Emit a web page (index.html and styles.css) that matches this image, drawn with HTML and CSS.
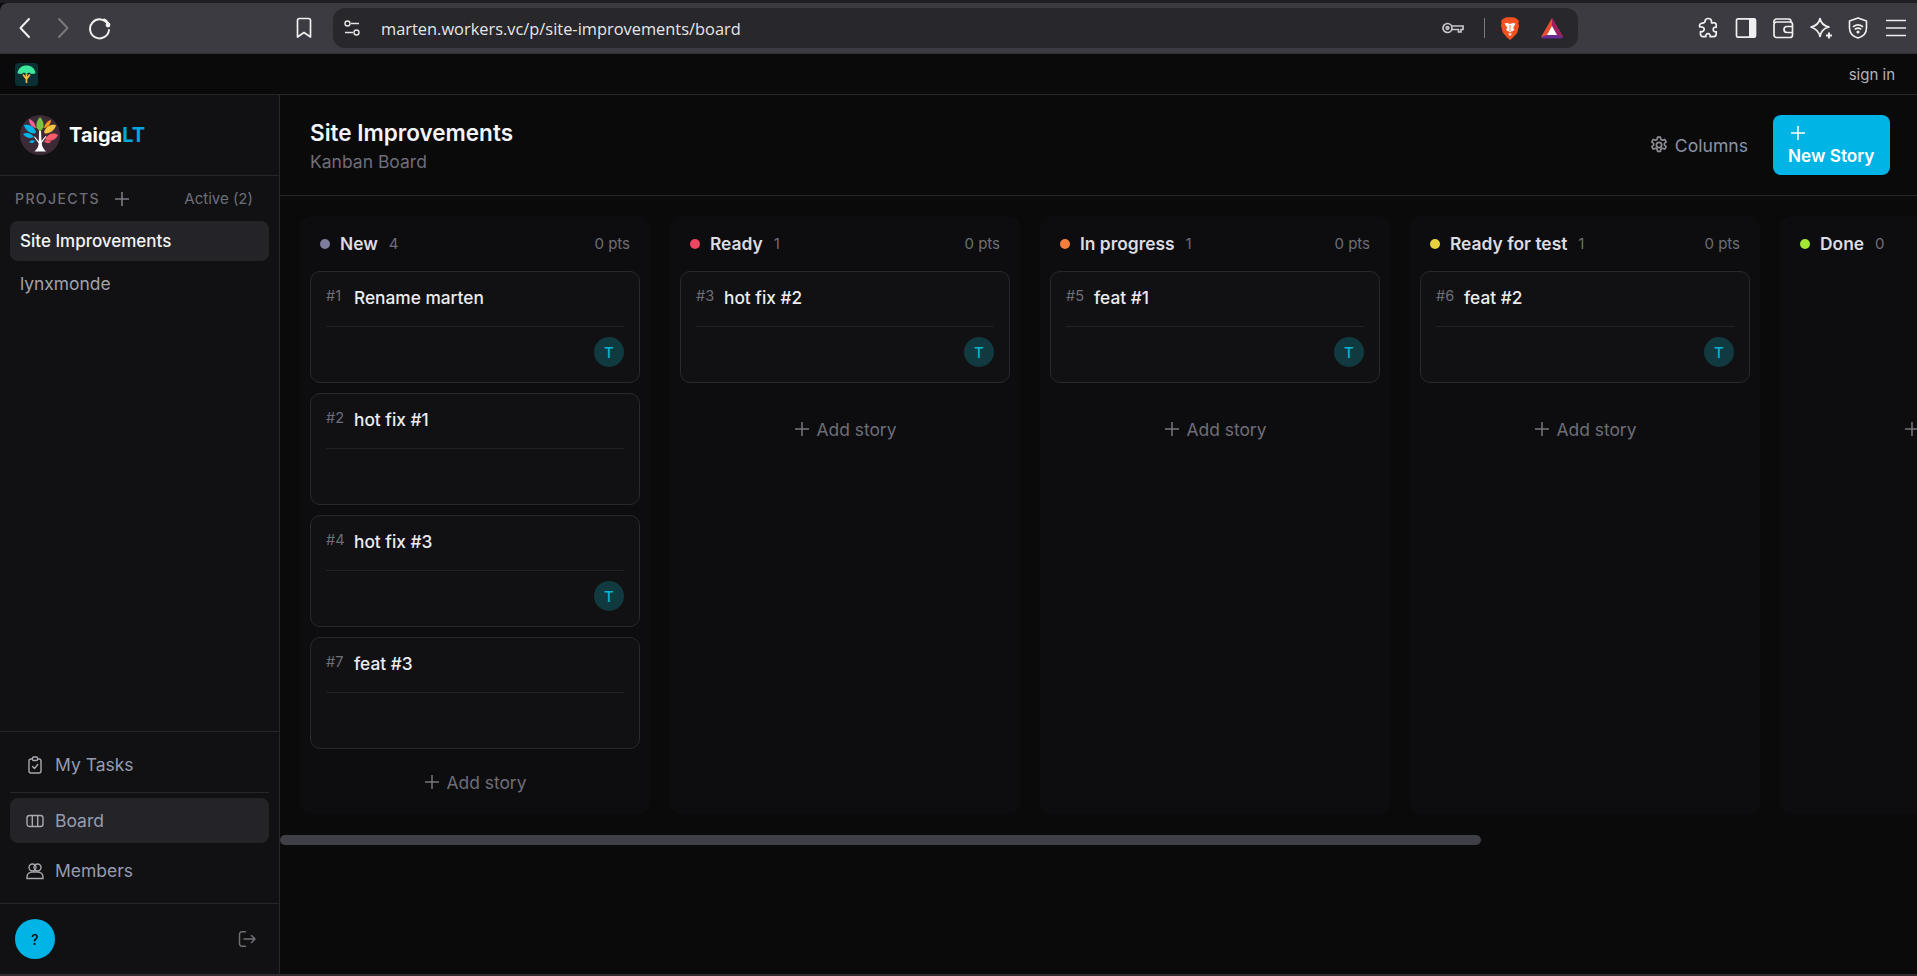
FILE: index.html
```html
<!DOCTYPE html>
<html lang="en">
<head>
<meta charset="utf-8">
<title>Site Improvements - Kanban Board</title>
<link rel="stylesheet" href="styles.css">
</head>
<body>
<div class="top-strip"></div>
<header class="browser-bar">
  <div class="nav-group">
    <span class="tb-icon"><svg width="24" height="24" viewBox="0 0 24 24" fill="none" stroke="#f0f0f0" stroke-width="2" stroke-linecap="round" stroke-linejoin="round"><path d="M16 3 7.500 12 16 21"/></svg></span>
    <span class="tb-icon"><svg width="24" height="24" viewBox="0 0 24 24" fill="none" stroke="#77777c" stroke-width="2" stroke-linecap="round" stroke-linejoin="round"><path d="M8 3l8.500 9L8 21"/></svg></span>
    <span class="tb-icon"><svg width="24" height="24" viewBox="0 0 24 24" fill="none" stroke="#f0f0f0" stroke-width="2" stroke-linecap="round"><path d="M20 8.500A9.500 9.500 0 1 0 21 14"/><path d="M16 3.500A9.500 9.500 0 0 1 20 7"/><circle cx="20" cy="9" r="2.400" fill="#f0f0f0" stroke="none"/></svg></span>
  </div>
  <span class="tb-icon bookmark"><svg width="24" height="24" viewBox="0 0 24 24" fill="none" stroke="#f0f0f0" stroke-width="1.700" stroke-linejoin="round"><path d="M5.500 4.500a2 2 0 0 1 2-2h9a2 2 0 0 1 2 2V21l-6.500-4.500L5.500 21z"/></svg></span>
  <div class="address">
    <svg class="site-settings" width="18" height="18" viewBox="0 0 18 18" fill="none" stroke="#e4e4e4" stroke-width="1.400"><circle cx="4.500" cy="4.500" r="2.500"/><path d="M8 4.500h8M2 13.500h8"/><circle cx="13.500" cy="13.500" r="2.500"/></svg>
    <span class="url">marten.workers.vc/p/site-improvements/board</span>
    <svg class="key" width="22" height="14" viewBox="0 0 22 14" fill="none" stroke="#c8c8cc" stroke-width="1.700"><circle cx="5.500" cy="7" r="4.500"/><circle cx="5.500" cy="7" r="1.300"/><path d="M10 5h11v3.500h-2V11h-2.500V8.500H10"/></svg>
    <span class="addr-sep"></span>
    <svg class="brave" width="20" height="23" viewBox="0 0 20 23"><path d="M3.500 1.500 6.500.2h7l3 1.300 2.500 2.500-.6 2.500.6 2.500-1.800 7L13 20.500 10 23l-3-2.500-4.200-5L1 8.500 1.600 6 1 4z" fill="#f4511e"/><path d="M4.500 6.500 7.500 6 10 7l2.500-1 3 .5-1.500 3-1 1.500 1.500 1.500-1.500 1.500-2 .5L10 16l-.5-1.500-2-.5L6 12.500 7.500 11l-1-1.500z" fill="#fff"/><path d="M8 16.500h4L10 19z" fill="#fff"/><path d="M10 8v6" stroke="#f4511e" stroke-width=".8"/></svg>
    <svg class="bat" width="24" height="22" viewBox="0 0 24 22"><path d="M12 1 1 20h22z" fill="#e94e2e"/><path d="M12 1 23 20h-6L12 11z" fill="#9e1f63"/><path d="M1 20h22l-1 1.500H2z" fill="#662d91"/><path d="M1 20 7 18h10l6 2z" fill="#662d91"/><path d="M12 9l5 9H7z" fill="#fff"/></svg>
  </div>
  <div class="ext-group">
    <span class="tb-icon"><svg width="24" height="24" viewBox="0 0 24 24" fill="none" stroke="#f0f0f0" stroke-width="1.700" stroke-linejoin="round"><path d="M9 5.500c0-4 6.500-4 6.500 0v1.300h2.700c1.200 0 2 .8 2 2v2.500c-1.300-.3-3 .2-3 2.200s1.900 2.700 3 2.200v2c0 1.800-1 3-2.800 3h-3.300c.5-1.500-.5-3-2.100-3s-2.800 1.500-2.100 3H7c-1.500 0-2.500-1-2.500-2.500v-2.700c2 .7 3.700-.5 3.700-2.300S6 10.500 3.800 11c-.9-1.500 0-3.200 1.700-3.700C7 7 9 7 9 5.500z"/></svg></span>
    <span class="tb-icon"><svg width="24" height="24" viewBox="0 0 24 24" fill="none"><rect x="2.500" y="2.800" width="19" height="18.400" rx="1.500" stroke="#f0f0f0" stroke-width="1.700"/><rect x="15" y="3" width="6.500" height="18" fill="#f0f0f0"/></svg></span>
    <span class="tb-icon"><svg width="24" height="24" viewBox="0 0 24 24" fill="none" stroke="#f0f0f0" stroke-width="1.700" stroke-linejoin="round"><path d="M3 7V5.500A2.500 2.500 0 0 1 5.500 3h12A2.500 2.500 0 0 1 20 5.500V7"/><rect x="3" y="6" width="18.500" height="15.500" rx="2.500"/><path d="M21.500 10.500H16a2.500 2.500 0 0 0 0 6h5.500"/></svg></span>
    <span class="tb-icon"><svg width="24" height="24" viewBox="0 0 24 24" fill="none" stroke="#f0f0f0" stroke-width="1.700" stroke-linejoin="round"><path d="M11 2.500c1 5 3.500 7.500 9 8.500-3 .7-5 1.800-6.500 3.800-1 1.300-1.800 3-2.500 5.700-1-5-3.500-7.500-9-9.500 5.500-1 8-3.500 9-8.500z"/><path d="M20 16.500v6M17 19.500h6" stroke-width="2"/></svg></span>
    <span class="tb-icon"><svg width="24" height="24" viewBox="0 0 24 24" fill="none" stroke="#f0f0f0" stroke-width="1.600" stroke-linecap="round" stroke-linejoin="round"><path d="M12 2 20.500 5v7c0 5-3.500 8.500-8.500 10-5-1.500-8.500-5-8.500-10V5z"/><path d="M7.500 10.500c2.700-2 6.300-2 9 0M9.300 13c1.600-1.100 3.800-1.100 5.400 0"/><circle cx="12" cy="16" r=".8" fill="#f0f0f0"/></svg></span>
    <span class="tb-icon"><svg width="24" height="24" viewBox="0 0 24 24" fill="none" stroke="#f0f0f0" stroke-width="1.700"><path d="M2 4.500h20M2 12h20M2 19.500h20"/></svg></span>
  </div>
</header>
<div class="app-bar">
  <svg class="app-mark" width="23" height="23" viewBox="0 0 23 23"><rect width="23" height="23" rx="3.500" fill="#0a3034"/><path d="M2.500 10.500C3 5 7 2.500 11.500 2.500S20 5 20.500 10.500l-4 .5-2.500-1.500-2.500 1.500-2.500-1.500L6.500 11z" fill="#3ee89a"/><path d="M11.500 11v9M8 11.500l3.500 4.500 3.500-4.500" stroke="#f5b642" stroke-width="1.700" fill="none"/></svg>
  <span class="sign-in">sign in</span>
</div>
<div class="app">
  <aside class="sidebar">
    <div class="brand">
      <svg width="40" height="40" viewBox="0 0 40 40"><circle cx="20" cy="20" r="20" fill="#3c2a36"/><path d="M20 2c3 3 4 7 3.500 10.500L20 17l-3.500-4.500C16 9 17 5 20 2z" fill="#7cc242"/><path d="M4 10c5-1 10 1 12 7l-1 1.500C10 19 5 15 4 10z" fill="#00b4e6"/><path d="M9 4c4 1 6 4 7 9-4-.5-7-4-7-9z" fill="#f06292"/><path d="M36 10c-5-1-10 1-12 7l1 1.500c5 .5 10-3.500 11-8.500z" fill="#f9c440"/><path d="M38 20c-5-3-10-1-13 4 5 3 10 2 13-4z" fill="#ff5b6b"/><path d="M31 5c-4 1-6 4-7 8 4-.5 7-4 7-8z" fill="#f7941e"/><path d="M3 19c4-2 8-1 11 3-4 2-8 1-11-3z" fill="#00b4e6"/><path d="M9 27c2-2 4-2 6-1-1 2-4 3-6 1z" fill="#00b4e6"/><path d="M31 27c-2-2-5-2-7-1 1 2 5 3 7 1z" fill="#ff5b6b"/><path d="M19 16h2l.5 10 4-5 .8.6-4.600 6.400c.3 4 2 6 4.300 8.500H14.500c2.300-2.500 4-4.500 4.200-8l-4.700-6.500.8-.6 4 5z" fill="#fff"/></svg>
      <span class="brand-name">Taiga<span class="brand-accent">LT</span></span>
    </div>
    <div class="projects-head">
      <span class="projects-label">PROJECTS</span>
      <svg width="16" height="16" viewBox="0 0 16 16" fill="none" stroke="#7a7a83" stroke-width="1.600"><path d="M8 1v14M1 8h14"/></svg>
      <span class="active-count">Active (2)</span>
    </div>
    <div class="project-list">
      <div class="project selected">Site Improvements</div>
      <div class="project">lynxmonde</div>
    </div>
    <nav class="side-nav">
      <div class="nav-item"><svg width="18" height="18" viewBox="0 0 18 18" fill="none" stroke="#a7a7ae" stroke-width="1.400" stroke-linecap="round" stroke-linejoin="round"><rect x="3" y="3" width="12" height="14" rx="2"/><rect x="6.500" y="1" width="5" height="3.500" rx="1" fill="#111113"/><path d="M6.500 10.500 8.500 12.500 11.800 8.500"/></svg><span>My Tasks</span></div>
      <div class="nav-rule"></div>
      <div class="nav-item selected"><svg width="18" height="18" viewBox="0 0 18 18" fill="none" stroke="#a7a7ae" stroke-width="1.400"><rect x="1" y="3.500" width="16" height="11" rx="2.500"/><path d="M6.300 3.500v11M11.700 3.500v11"/></svg><span>Board</span></div>
      <div class="nav-item"><svg width="18" height="18" viewBox="0 0 18 18" fill="none" stroke="#a7a7ae" stroke-width="1.400"><circle cx="6.500" cy="5.500" r="3.500"/><circle cx="11.500" cy="5.500" r="3.500"/><path d="M1 16.500v-1.500c0-3 2.500-5 5.500-5h5c3 0 5.500 2 5.500 5v1.500z"/></svg><span>Members</span></div>
    </nav>
    <div class="user-foot">
      <span class="user-badge">?</span>
      <svg width="18" height="18" viewBox="0 0 18 18" fill="none" stroke="#6f6f78" stroke-width="1.500" stroke-linecap="round" stroke-linejoin="round"><path d="M7.500 1.800H4a2.500 2.500 0 0 0-2.500 2.500v9.400A2.500 2.500 0 0 0 4 16.200h3.500"/><path d="M6 9h11M13.500 5.500 17 9l-3.500 3.500"/></svg>
    </div>
  </aside>
  <main class="main">
    <div class="page-head">
      <div class="page-title">
        <h1>Site Improvements</h1>
        <p>Kanban Board</p>
      </div>
      <button class="columns-btn"><svg width="20" height="20" viewBox="0 0 24 24" fill="none" stroke="#8d8d96" stroke-width="2"><path d="M10.300 2.500h3.400l.6 2.900 1.800.9 2.800-1 1.700 2.900-2.200 2c.1.700.1 1.100 0 1.800l2.200 2-1.700 2.900-2.800-1-1.800 1-.6 2.800h-3.400l-.6-2.800-1.800-1-2.800 1-1.700-2.900 2.200-2a5 5 0 0 1 0-1.800l-2.200-2 1.700-2.900 2.800 1 1.800-.9z" stroke-linejoin="round"/><circle cx="12" cy="12" r="3.200"/></svg><span>Columns</span></button>
      <button class="new-btn"><svg class="new-plus" width="16" height="16" viewBox="0 0 16 16" fill="none" stroke="#fff" stroke-width="1.500"><path d="M8 1v14M1 8h14"/></svg><span>New Story</span></button>
    </div>
    <div class="board">
      <section class="column">
        <div class="col-head"><i class="dot dot-new"></i><b>New</b><span class="count">4</span><span class="pts">0 pts</span></div>
        <div class="cards">
          <article class="card"><div class="card-top"><span class="card-id">#1</span><span class="card-title">Rename marten</span></div><div class="card-foot"><span class="avatar">T</span></div></article>
          <article class="card"><div class="card-top"><span class="card-id">#2</span><span class="card-title">hot fix #1</span></div><div class="card-foot"></div></article>
          <article class="card"><div class="card-top"><span class="card-id">#4</span><span class="card-title">hot fix #3</span></div><div class="card-foot"><span class="avatar">T</span></div></article>
          <article class="card"><div class="card-top"><span class="card-id">#7</span><span class="card-title">feat #3</span></div><div class="card-foot"></div></article>
        </div>
        <div class="add-story"><svg width="16" height="16" viewBox="0 0 16 16" fill="none" stroke="#75757e" stroke-width="1.500"><path d="M8 1v14M1 8h14"/></svg><span>Add story</span></div>
      </section>
      <section class="column">
        <div class="col-head"><i class="dot dot-ready"></i><b>Ready</b><span class="count">1</span><span class="pts">0 pts</span></div>
        <div class="cards">
          <article class="card"><div class="card-top"><span class="card-id">#3</span><span class="card-title">hot fix #2</span></div><div class="card-foot"><span class="avatar">T</span></div></article>
        </div>
        <div class="add-story"><svg width="16" height="16" viewBox="0 0 16 16" fill="none" stroke="#75757e" stroke-width="1.500"><path d="M8 1v14M1 8h14"/></svg><span>Add story</span></div>
      </section>
      <section class="column">
        <div class="col-head"><i class="dot dot-progress"></i><b>In progress</b><span class="count">1</span><span class="pts">0 pts</span></div>
        <div class="cards">
          <article class="card"><div class="card-top"><span class="card-id">#5</span><span class="card-title">feat #1</span></div><div class="card-foot"><span class="avatar">T</span></div></article>
        </div>
        <div class="add-story"><svg width="16" height="16" viewBox="0 0 16 16" fill="none" stroke="#75757e" stroke-width="1.500"><path d="M8 1v14M1 8h14"/></svg><span>Add story</span></div>
      </section>
      <section class="column">
        <div class="col-head"><i class="dot dot-test"></i><b>Ready for test</b><span class="count">1</span><span class="pts">0 pts</span></div>
        <div class="cards">
          <article class="card"><div class="card-top"><span class="card-id">#6</span><span class="card-title">feat #2</span></div><div class="card-foot"><span class="avatar">T</span></div></article>
        </div>
        <div class="add-story"><svg width="16" height="16" viewBox="0 0 16 16" fill="none" stroke="#75757e" stroke-width="1.500"><path d="M8 1v14M1 8h14"/></svg><span>Add story</span></div>
      </section>
      <section class="column">
        <div class="col-head"><i class="dot dot-done"></i><b>Done</b><span class="count">0</span><span class="pts">0 pts</span></div>
        <div class="cards"></div>
        <div class="add-story"><svg width="16" height="16" viewBox="0 0 16 16" fill="none" stroke="#75757e" stroke-width="1.500"><path d="M8 1v14M1 8h14"/></svg><span>Add story</span></div>
      </section>
    </div>
    <div class="h-scroll"><div class="h-thumb"></div></div>
  </main>
</div>
<div class="bottom-edge"></div>
</body>
</html>
```
FILE: styles.css
```css
* { box-sizing: border-box; }
html, body { height: 100%; }
body {
  margin: 0;
  height: 976px;
  overflow: hidden;
  display: flex;
  flex-direction: column;
  background: #0a0a0b;
  color: #e8e8ec;
  font-family: Inter, "Liberation Sans", sans-serif;
  font-size: 16px;
}
svg { display: block; flex: none; }

.top-strip { height: 3px; background: #1e1e23; flex: none; }
.browser-bar {
  height: 51px;
  flex: none;
  display: flex;
  align-items: center;
  background: #3b3b41;
  border-radius: 8px 0 0 0;
  padding: 0 9px 0 13px;
  border-bottom: 1px solid #2e2e33;
}
.tb-icon { width: 24px; height: 24px; display: flex; align-items: center; justify-content: center; flex: none; }
.nav-group { display: flex; gap: 13.500px; }
.bookmark { margin-left: 180px; }
.address {
  margin-left: 17px;
  width: 1245px;
  height: 40px;
  flex: none;
  display: flex;
  align-items: center;
  background: #27272c;
  border-radius: 12px;
  padding: 0 14px 0 10px;
}
.url {
  margin-left: 20px;
  font-family: "Open Sans", sans-serif;
  font-size: 16.400px;
  color: #e6e6e6;
}
.key { margin-left: auto; }
.addr-sep { width: 1px; height: 20px; background: #77777c; margin-left: 20px; }
.brave { margin-left: 15px; }
.bat { margin-left: 20px; }
.ext-group { display: flex; gap: 13.600px; margin-left: 118px; }

.app-bar {
  height: 41px;
  flex: none;
  display: flex;
  align-items: center;
  justify-content: space-between;
  padding: 0 22px 0 15px;
  background: #0a0a0b;
  border-bottom: 1px solid #27272a;
}
.sign-in { margin-top: 1px; font-size: 15px; color: #b4b4ba; }

.app { flex: 1; min-height: 0; display: flex; }
.sidebar {
  width: 280px;
  flex: none;
  display: flex;
  flex-direction: column;
  background: #111113;
  border-right: 1px solid #27272a;
}
.brand {
  height: 81px;
  flex: none;
  display: flex;
  align-items: center;
  gap: 9px;
  padding-left: 20px;
  border-bottom: 1px solid #27272a;
}
.brand-name { font-size: 20px; font-weight: 700; color: #fff; }
.brand-accent { color: #00a6e0; }
.projects-head {
  height: 45px;
  flex: none;
  display: flex;
  align-items: center;
  padding: 0 26px 0 15px;
}
.projects-head svg { margin-left: 14px; }
.projects-label { font-size: 14px; font-weight: 500; letter-spacing: 1.400px; color: #6e6e78; }
.active-count { margin-left: auto; font-size: 15px; color: #6e6e78; }
.project-list { padding: 0 10px; display: flex; flex-direction: column; gap: 2px; }
.project { height: 40px; display: flex; align-items: center; padding: 0 10px; border-radius: 8px; font-size: 17.400px; color: #a1a1aa; }
.project.selected { background: #242428; color: #f4f4f6; font-size: 17px; font-weight: 500; }

.side-nav {
  margin-top: auto;
  padding: 10px 10px 10px;
  border-top: 1px solid #27272a;
  border-bottom: 1px solid #27272a;
}
.nav-item {
  height: 45px;
  display: flex;
  align-items: center;
  gap: 11px;
  padding: 0 16px;
  border-radius: 8px;
  font-size: 17.500px;
  color: #959cb0;
}
.nav-item + .nav-item { margin-top: 5px; }
.nav-item.selected { background: #242428; }
.nav-rule { height: 1px; background: #27272a; margin: 5px 0 5px; }
.user-foot {
  height: 70px;
  flex: none;
  display: flex;
  align-items: center;
  justify-content: space-between;
  padding: 0 23px 0 15px;
}
.user-badge {
  width: 40px;
  height: 40px;
  border-radius: 50%;
  background: #00b4e6;
  color: #0a0a0b;
  font-size: 14px;
  font-weight: 500;
  display: flex;
  align-items: center;
  justify-content: center;
}

.main { flex: 1; min-width: 0; display: flex; flex-direction: column; background: #0a0a0b; }
.page-head {
  height: 101px;
  flex: none;
  display: flex;
  align-items: center;
  padding: 0 27px 0 30px;
  border-bottom: 1px solid #27272a;
}
.page-title { margin-right: auto; padding-top: 1px; }
.page-title h1 { margin: 0; font-size: 22.500px; line-height: 28px; font-weight: 600; color: #f4f4f6; }
.page-title p { margin: 5px 0 0; font-size: 17.500px; line-height: 20px; color: #6e6e78; }
.columns-btn {
  display: flex;
  align-items: center;
  gap: 6px;
  background: none;
  border: 0;
  padding: 0;
  margin-right: 25px;
  font: inherit;
  font-size: 17.600px;
  color: #8d93a5;
}
.columns-btn span { margin-top: 1px; }
.new-btn {
  width: 117px;
  height: 60px;
  display: flex;
  flex-direction: column;
  align-items: flex-start;
  justify-content: center;
  gap: 5px;
  padding: 1px 15px 0;
  border: 0;
  border-radius: 8px;
  background: #00b4e6;
  color: #fff;
  font: inherit;
  font-size: 17.200px;
  font-weight: 600;
  line-height: 20px;
}
.new-plus { margin-left: 2px; }

.board {
  display: flex;
  gap: 20px;
  padding: 20px 0 20px 20px;
  overflow: hidden;
  flex: none;
}
.column {
  width: 350px;
  flex: none;
  display: flex;
  flex-direction: column;
  padding: 0 10px 12px;
  background: #0d0d0f;
  border-radius: 12px;
}
.col-head {
  display: flex;
  align-items: center;
  height: 55px;
  padding: 0 10px;
  color: #dcdce2;
}
.col-head b { font-weight: 600; font-size: 17.400px; margin-left: 10px; }
.dot { width: 10px; height: 10px; border-radius: 50%; flex: none; }
.dot-new { background: #7c7c9c; }
.dot-ready { background: #ef4461; }
.dot-progress { background: #f0803c; }
.dot-test { background: #e8d23c; }
.dot-done { background: #a3e635; }
.count { margin-left: 11px; font-size: 15px; color: #6e6e78; }
.pts { margin-left: auto; font-size: 15px; color: #6e6e78; }
.cards { display: flex; flex-direction: column; gap: 10px; min-height: 125px; }
.card {
  height: 112px;
  flex: none;
  padding: 14px 15px 15px;
  background: #111114;
  border: 1px solid #29292d;
  border-radius: 10px;
}
.card-top {
  display: flex;
  height: 41px;
  padding-bottom: 17px;
  border-bottom: 1px solid #222226;
}
.card-id { width: 28px; flex: none; font-size: 14.500px; line-height: 20px; color: #6e6e78; }
.card-title { font-size: 17.300px; line-height: 24px; font-weight: 500; color: #ececf0; }
.card-foot { display: flex; justify-content: flex-end; padding-top: 10px; }
.avatar {
  width: 30px;
  height: 30px;
  border-radius: 50%;
  background: #113a40;
  color: #06b6d4;
  font-size: 15px;
  font-weight: 500;
  display: flex;
  align-items: center;
  justify-content: center;
}
.add-story {
  height: 40px;
  margin-top: 13px;
  display: flex;
  align-items: center;
  justify-content: center;
  gap: 7px;
  font-size: 17.400px;
  color: #6e6e78;
}
.h-scroll { height: 10px; margin-top: 1px; flex: none; }
.h-thumb { width: 1201px; height: 10px; border-radius: 5px; background: #3f3f46; }
.bottom-edge { height: 2px; flex: none; background: #33282b; }
```
